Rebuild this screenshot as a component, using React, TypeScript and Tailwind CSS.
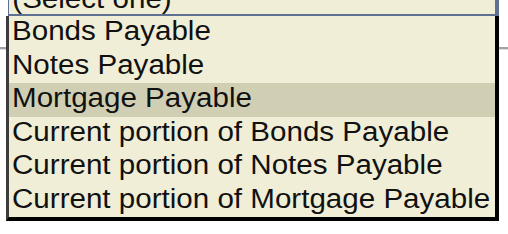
import React from 'react';

const options = [
  'Bonds Payable',
  'Notes Payable',
  'Mortgage Payable',
  'Current portion of Bonds Payable',
  'Current portion of Notes Payable',
  'Current portion of Mortgage Payable',
];

const App: React.FC = () => {
  const selected = 2;

  return (
    <div className="relative w-[508px] h-[234px] bg-white overflow-hidden font-['Liberation_Sans',Arial,sans-serif] text-[#111]">
      {/* closed select, top cut off */}
      <div className="ml-[8px] w-[491px] h-[43px] -mt-[26px] flex items-end bg-[#f0eed6] border-l border-r-[4px] border-b-[3px] border-[#5f7192]">
        <span className="block pl-[3px] text-[27px] leading-[30px] origin-left scale-x-[1.095] whitespace-nowrap">(Select one)</span>
      </div>

      {/* page rule behind the open list */}
      <div className="mt-[30px] h-[2px] bg-[#a3a3a3]" />
      <div className="h-[1px] bg-[#dedede]" />

      {/* open list */}
      <ul className="absolute top-[16px] left-[6px] w-[493px] bg-[#f0eed6] border-l-[3px] border-l-[#3c3c3c] border-r-[4px] border-r-black border-b-[4px] border-b-black">
        {options.map((opt, i) => (
          <li
            key={opt}
            className={`h-[33.5px] pl-[3px] ${i === selected ? 'bg-[#d0cfb4]' : ''}`}
          >
            <span className="block text-[27px] leading-[30px] origin-left scale-x-[1.095] whitespace-nowrap">{opt}</span>
          </li>
        ))}
      </ul>
    </div>
  );
};

export default App;
